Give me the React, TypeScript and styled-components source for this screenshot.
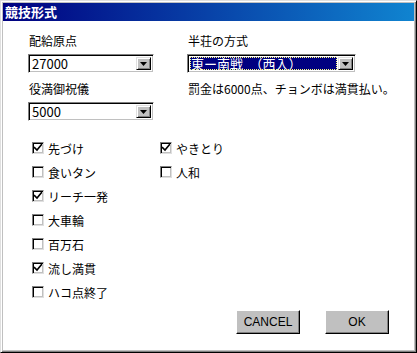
import React from "react";
import styled, { createGlobalStyle } from "styled-components";

const GlobalStyle = createGlobalStyle`
  html, body {
    margin: 0;
    padding: 0;
    background: #c0c0c0;
  }
  body {
    font-family: "Noto Sans CJK JP", "DejaVu Sans", sans-serif;
    font-size: 12px;
    color: #000;
  }
`;

const LEFT_CHECKS = [
  { label: "先づけ", checked: true },
  { label: "食いタン", checked: false },
  { label: "リーチ一発", checked: true },
  { label: "大車輪", checked: false },
  { label: "百万石", checked: false },
  { label: "流し満貫", checked: true },
  { label: "ハコ点終了", checked: false },
];

const RIGHT_CHECKS = [
  { label: "やきとり", checked: true },
  { label: "人和", checked: false },
];

function Arrow() {
  return (
    <svg width="7" height="4" viewBox="0 0 7 4" aria-hidden>
      <path d="M0 0h7L3.5 4z" fill="#000" />
    </svg>
  );
}

function Check() {
  return (
    <svg width="8" height="8" viewBox="0 0 8 8" aria-hidden>
      <path d="M0 3l3 3 5-6" fill="none" stroke="#000" strokeWidth="1.6" />
    </svg>
  );
}

function Select({ value, focused, width }: { value: string; focused?: boolean; width: number }) {
  return (
    <SelectBox style={{ width }}>
      <SelectValue $focused={focused}>{value}</SelectValue>
      <DropButton>
        <Arrow />
      </DropButton>
    </SelectBox>
  );
}

function CheckRow({ label, checked }: { label: string; checked: boolean }) {
  return (
    <CheckItem>
      <CheckBox>{checked && <Check />}</CheckBox>
      <span>{label}</span>
    </CheckItem>
  );
}

export default function App() {
  return (
    <>
      <GlobalStyle />
      <Window>
        <TitleBar>競技形式</TitleBar>
        <Client>
          <TopGrid>
            <Field>
              <Label>配給原点</Label>
              <Select value="27000" width={126} />
            </Field>
            <Field>
              <Label>半荘の方式</Label>
              <Select value="東ー南戦　（西入）" focused width={169} />
            </Field>
            <Field>
              <Label>役満御祝儀</Label>
              <Select value="5000" width={126} />
            </Field>
            <Field>
              <Label>罰金は6000点、チョンボは満貫払い。</Label>
            </Field>
          </TopGrid>
          <CheckArea>
            <CheckColumn>
              {LEFT_CHECKS.map((c) => (
                <CheckRow key={c.label} {...c} />
              ))}
            </CheckColumn>
            <CheckColumn>
              {RIGHT_CHECKS.map((c) => (
                <CheckRow key={c.label} {...c} />
              ))}
            </CheckColumn>
          </CheckArea>
          <ButtonRow>
            <Button>CANCEL</Button>
            <Button>OK</Button>
          </ButtonRow>
        </Client>
      </Window>
    </>
  );
}

const Window = styled.div`
  width: 417px;
  height: 353px;
  box-sizing: border-box;
  background: #c0c0c0;
  border-top: 1px solid #dfdfdf;
  border-left: 1px solid #dfdfdf;
  border-right: 1px solid #000;
  border-bottom: 1px solid #000;
  box-shadow: inset 1px 1px 0 #fff, inset -1px -1px 0 #808080;
  padding: 2px;
  display: flex;
  flex-direction: column;
`;

const TitleBar = styled.div`
  height: 18px;
  flex: none;
  background: linear-gradient(90deg, #000080 0%, #1084d0 100%);
  color: #fff;
  font-weight: bold;
  font-size: 13px;
  line-height: 18px;
  padding-left: 2px;
`;

const Client = styled.div`
  flex: 1;
  background: #fff;
  padding: 12px 0 0 25px;
  display: flex;
  flex-direction: column;
`;

const TopGrid = styled.div`
  display: grid;
  grid-template-columns: 159px 1fr;
  row-gap: 8px;
`;

const Field = styled.div`
  display: flex;
  flex-direction: column;
  gap: 6px;
`;

const Label = styled.div`
  height: 15px;
  line-height: 15px;
  padding-left: 1px;
  white-space: nowrap;
`;

const SelectBox = styled.div`
  height: 19px;
  box-sizing: border-box;
  display: flex;
  background: #fff;
  border-top: 1px solid #808080;
  border-left: 1px solid #808080;
  border-right: 1px solid #fff;
  border-bottom: 1px solid #fff;
  box-shadow: inset 1px 1px 0 #000, inset -1px -1px 0 #c0c0c0;
  padding: 2px;
`;

const SelectValue = styled.div<{ $focused?: boolean }>`
  flex: 1;
  height: 13px;
  font-size: 13px;
  line-height: 13px;
  padding-left: 1px;
  white-space: nowrap;
  overflow: visible;
  background: ${(p) => (p.$focused ? "#000080" : "transparent")};
  color: ${(p) => (p.$focused ? "#fff" : "#000")};
  outline: ${(p) => (p.$focused ? "1px dotted #ffff80" : "none")};
  outline-offset: -1px;
  margin-right: 1px;
`;

const DropButton = styled.div`
  width: 15px;
  flex: none;
  box-sizing: border-box;
  background: #c0c0c0;
  display: flex;
  align-items: center;
  justify-content: center;
  border-top: 1px solid #dfdfdf;
  border-left: 1px solid #dfdfdf;
  border-right: 1px solid #000;
  border-bottom: 1px solid #000;
  box-shadow: inset 1px 1px 0 #fff, inset -1px -1px 0 #808080;
`;

const CheckArea = styled.div`
  display: grid;
  grid-template-columns: 128px 1fr;
  margin-top: 15px;
  padding-left: 4px;
`;

const CheckColumn = styled.div`
  display: flex;
  flex-direction: column;
`;

const CheckItem = styled.div`
  height: 24px;
  display: flex;
  align-items: center;
  gap: 4px;
  white-space: nowrap;
`;

const CheckBox = styled.div`
  width: 12px;
  height: 12px;
  box-sizing: border-box;
  flex: none;
  display: flex;
  align-items: center;
  justify-content: center;
  background: #fff;
  border-top: 1px solid #808080;
  border-left: 1px solid #808080;
  border-right: 1px solid #dfdfdf;
  border-bottom: 1px solid #dfdfdf;
  box-shadow: inset 1px 1px 0 #000, inset -1px -1px 0 #c0c0c0;
`;

const ButtonRow = styled.div`
  display: flex;
  justify-content: flex-end;
  gap: 25px;
  padding-right: 25px;
  margin-top: 6px;
`;

const Button = styled.div`
  width: 64px;
  height: 24px;
  box-sizing: border-box;
  background: #c0c0c0;
  display: flex;
  align-items: center;
  justify-content: center;
  font-family: "Liberation Sans", Arial, sans-serif;
  font-size: 12px;
  border-top: 1px solid #fff;
  border-left: 1px solid #fff;
  border-right: 1px solid #000;
  border-bottom: 1px solid #000;
  box-shadow: inset -1px -1px 0 #808080;
`;
